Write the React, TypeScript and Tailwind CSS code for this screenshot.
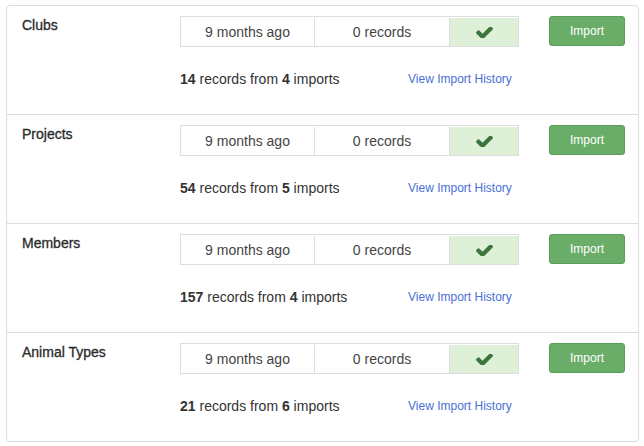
import React from 'react';

type Source = {
  name: string;
  records: number;
  imports: number;
};

const sources: Source[] = [
  { name: 'Clubs', records: 14, imports: 4 },
  { name: 'Projects', records: 54, imports: 5 },
  { name: 'Members', records: 157, imports: 4 },
  { name: 'Animal Types', records: 21, imports: 6 },
];

const Check: React.FC = () => (
  <svg width="17" height="11" viewBox="121 430 1550 960" fill="#3c763d">
    <path d="M1671 566q0 40-28 68l-724 724-136 136q-28 28-68 28t-68-28l-136-136-362-362q-28-28-28-68t28-68l136-136q28-28 68-28t68 28l294 295 656-657q28-28 68-28t68 28l136 136q28 28 28 68z" />
  </svg>
);

const ImportRow: React.FC<{ source: Source }> = ({ source }) => (
  <div className="flex pl-[15px] pr-[13px] pt-[10px] pb-[25px] border-b border-[#ddd] last:border-0">
    <div className="w-[158px] pt-[1px] text-[14px] leading-[16px] text-[#2a2a2a] [-webkit-text-stroke:0.3px_#2a2a2a]">
      {source.name}
    </div>
    <div className="w-[339px]">
      <div className="flex h-[31px] border border-[#ddd] text-[14px] text-[#444] pt-[1px]">
        <div className="w-[134px] flex items-center justify-center border-r border-[#ddd]">
          9 months ago
        </div>
        <div className="w-[135px] flex items-center justify-center border-r border-[#ddd]">
          0 records
        </div>
        <div className="flex-1 flex items-center justify-center bg-[#dff0d8]">
          <Check />
        </div>
      </div>
      <div className="grid grid-cols-[228px_1fr] mt-[22px] leading-[20px] items-center">
        <div className="text-[14px] text-[#333]">
          <span className="font-bold">{source.records}</span> records from{' '}
          <span className="font-bold">{source.imports}</span> imports
        </div>
        <a href="#" className="text-[12px] text-[#4a6fd6]">
          View Import History
        </a>
      </div>
    </div>
    <div className="ml-auto">
      <button className="w-[76px] h-[30px] rounded-[3px] bg-[#69ad69] border border-[#5a9d5a] text-white text-[12px]">
        Import
      </button>
    </div>
  </div>
);

const App: React.FC = () => {
  return (
    <div className="w-[644px] h-[446px] bg-white pt-[5px] px-[6px] font-['Liberation_Sans',Arial,sans-serif]">
      <div className="w-[633px] border border-[#ddd] rounded-[4px] bg-white">
        {sources.map((s) => (
          <ImportRow key={s.name} source={s} />
        ))}
      </div>
    </div>
  );
};

export default App;
